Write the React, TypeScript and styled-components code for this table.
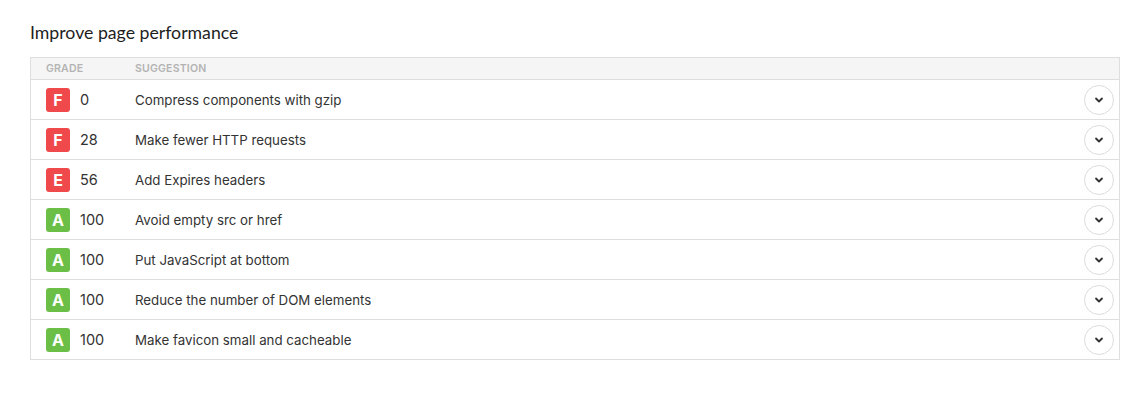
import styled, { createGlobalStyle } from "styled-components";

type Grade = "A" | "E" | "F";

interface IRule {
  grade: Grade;
  score: number;
  text: string;
}

const rules: IRule[] = [
  { grade: "F", score: 0, text: "Compress components with gzip" },
  { grade: "F", score: 28, text: "Make fewer HTTP requests" },
  { grade: "E", score: 56, text: "Add Expires headers" },
  { grade: "A", score: 100, text: "Avoid empty src or href" },
  { grade: "A", score: 100, text: "Put JavaScript at bottom" },
  { grade: "A", score: 100, text: "Reduce the number of DOM elements" },
  { grade: "A", score: 100, text: "Make favicon small and cacheable" },
];

const gradeColor: Record<Grade, string> = {
  A: "#6bbf47",
  E: "#f0494b",
  F: "#f0494b",
};

function Chevron() {
  return (
    <svg width="10" height="10" viewBox="0 0 10 10">
      <path
        d="M2 3.5 L5 6.5 L8 3.5"
        fill="none"
        stroke="#333"
        strokeWidth="1.8"
        strokeLinecap="round"
        strokeLinejoin="round"
      />
    </svg>
  );
}

function App() {
  return (
    <>
      <GlobalStyle />
      <Page>
        <Title>Improve page performance</Title>
        <Table>
          <HeaderRow>
            <GradeCol>Grade</GradeCol>
            <span>Suggestion</span>
          </HeaderRow>
          {rules.map((rule) => (
            <Row key={rule.text}>
              <GradeCol>
                <Badge $grade={rule.grade}>{rule.grade}</Badge>
                <Score>{rule.score}</Score>
              </GradeCol>
              <Suggestion>{rule.text}</Suggestion>
              <ToggleButton>
                <Chevron />
              </ToggleButton>
            </Row>
          ))}
        </Table>
      </Page>
    </>
  );
}

export default App;

const GlobalStyle = createGlobalStyle`
  body {
    margin: 0;
    background: #fff;
    font-family: Inter, "Liberation Sans", sans-serif;
  }
`;

const Page = styled.div`
  padding: 21px 21px 0 30px;
`;

const Title = styled.h2`
  margin: 0 0 12px;
  font-family: Lato, "Liberation Sans", sans-serif;
  font-size: 17.7px;
  font-weight: 400;
  color: #1e1e1e;
  line-height: 24px;
`;

const Table = styled.div`
  border: 1px solid #dedede;
  border-bottom: none;
`;

const HeaderRow = styled.div`
  display: flex;
  align-items: center;
  height: 21px;
  padding-left: 15px;
  background: #f5f5f5;
  border-bottom: 1px solid #dedede;
  font-size: 10.5px;
  font-weight: 600;
  text-transform: uppercase;
  letter-spacing: 0.2px;
  color: #b3b3b3;
`;

const GradeCol = styled.div`
  width: 89px;
  display: flex;
  align-items: center;
  flex-shrink: 0;
`;

const Row = styled.div`
  display: flex;
  align-items: center;
  height: 39px;
  padding: 0 5px 0 15px;
  border-bottom: 1px solid #dedede;
`;

const Badge = styled.div<{ $grade: Grade }>`
  width: 24px;
  height: 24px;
  border-radius: 3px;
  background: ${({ $grade }) => gradeColor[$grade]};
  color: #fff;
  font-size: 16px;
  font-weight: 700;
  display: flex;
  align-items: center;
  justify-content: center;
`;

const Score = styled.span`
  margin-left: 10px;
  font-size: 14.5px;
  color: #333;
`;

const Suggestion = styled.span`
  flex: 1;
  font-size: 13.3px;
  color: #333;
`;

const ToggleButton = styled.button`
  width: 30px;
  height: 30px;
  border-radius: 50%;
  border: 1px solid #dcdcdc;
  background: #fff;
  padding: 0;
  display: flex;
  align-items: center;
  justify-content: center;
  cursor: pointer;
`;
